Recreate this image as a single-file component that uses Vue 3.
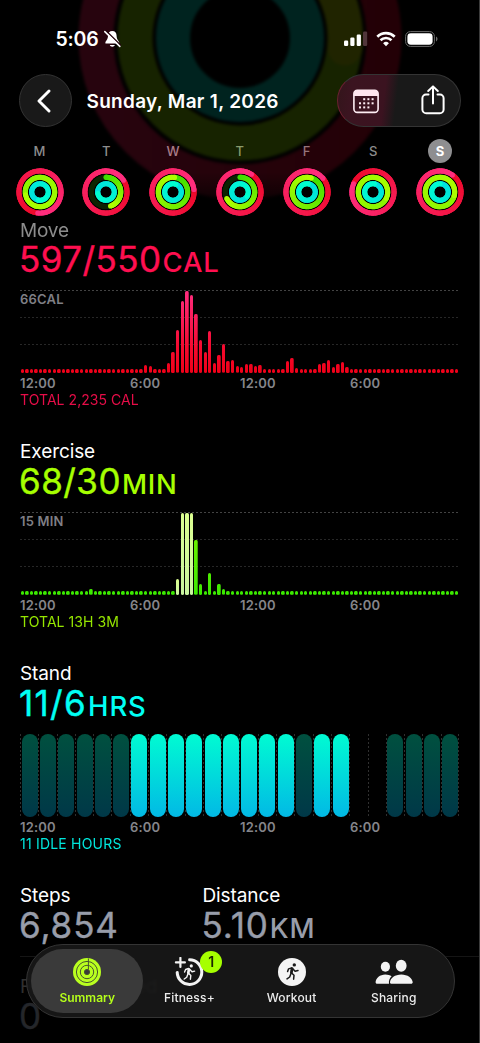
<script setup>
const GRID_COLUMNS = 96

function buildSeries(base, overrides) {
  return Array.from({ length: GRID_COLUMNS }, (_, i) => overrides[i] ?? base)
}

const moveBars = buildSeries(4, {
  27: 8, 28: 6.7, 32: 9.7, 33: 21, 34: 42.7, 35: 72.3, 36: 82.3, 37: 78.3, 38: 59.3, 39: 33,
  40: 21, 41: 42, 42: 10, 43: 18, 44: 28.7, 45: 12.3, 46: 13.3, 47: 6.7, 48: 6.3, 49: 9.3,
  50: 9.3, 51: 7, 52: 8.3, 53: 4.4, 58: 12, 59: 15, 60: 5, 64: 4.4, 65: 8.7, 66: 10.3,
  67: 13.3, 68: 6, 69: 9, 70: 11, 71: 6,
})
const exerciseBars = buildSeries(3.8, {
  15: 5.7, 34: 16.3, 35: 82.3, 36: 82.3, 37: 82.3, 38: 54.7, 39: 11, 41: 22, 43: 11, 44: 5.7,
})
const isWorkout = (i) => i >= 34 && i <= 37
const standHours = 'iiiiiiaaaaaaaaaiaa--iiii'.split('')
const axis = ['12:00', '6:00', '12:00', '6:00']

const palette = {
  red: [[238, 8, 40], [255, 46, 126]],
  green: [[60, 222, 0], [176, 255, 0]],
  lime: [[136, 244, 0], [172, 255, 0]],
  cyan: [[0, 222, 222], [0, 255, 208]],
}

const days = [
  { name: 'M', red: 186, green: 259, tone: 'lime', cyan: 190 },
  { name: 'T', red: 56, green: 162, tone: 'green', partial: true, cyan: 260 },
  { name: 'W', red: 83, green: 6, tone: 'green', cyan: 20, tint: 'pink' },
  { name: 'T', red: 33, green: 244, tone: 'green', partial: true, cyan: 120, tint: 'olive' },
  { name: 'F', red: 49, green: 17, tone: 'green', cyan: 10, tint: 'rose' },
  { name: 'S', red: 293, green: 115, tone: 'lime', cyan: 10 },
  { name: 'S', red: 36, green: 104, tone: 'lime', cyan: 0, selected: true },
]

function point(r, deg) {
  const a = (deg * Math.PI) / 180
  return [24 + r * Math.sin(a), 24 - r * Math.cos(a)]
}

// Splits a ring into short overlapping arcs so the colour can progress along its sweep.
function ringSegments(r, start, end, [from, to]) {
  const count = 40
  const step = (end - start) / count
  return Array.from({ length: count }, (_, i) => {
    const [x1, y1] = point(r, start + i * step - (i ? 8 : 0))
    const [x2, y2] = point(r, start + (i + 1) * step)
    const t = i / (count - 1)
    const rgb = from.map((c, k) => Math.round(c + (to[k] - c) * t))
    return { d: `M${x1} ${y1}A${r} ${r} 0 0 1 ${x2} ${y2}`, color: `rgb(${rgb})` }
  })
}

function makeRing(r, end, tone, partial) {
  const colors = palette[tone]
  const mid = colors[0].map((c, k) => Math.round((c + colors[1][k]) / 2))
  const [cx, cy] = point(r, end)
  const [sx, sy] = point(r, 0)
  return {
    r, cx, cy, sx, sy, partial,
    segments: ringSegments(r, partial ? 0 : end - 360, end, colors),
    baseColor: `rgb(${mid})`,
    startColor: `rgb(${colors[0]})`,
    endColor: `rgb(${colors[1]})`,
  }
}

const week = days.map((d) => ({
  ...d,
  rings: [
    makeRing(21.1, d.red, 'red', false),
    makeRing(14.7, d.green, d.tone, d.partial),
    makeRing(8.3, d.cyan, 'cyan', false),
  ],
}))
</script>

<template>
  <div class="screen">
    <svg class="halo" width="480" height="215" viewBox="0 0 480 215">
      <defs>
        <linearGradient id="haloRed" x1="0" x2="1" y1="0" y2="0">
          <stop offset="0" stop-color="#27040e" />
          <stop offset="1" stop-color="#230006" />
        </linearGradient>
        <linearGradient id="fade" x1="0" x2="0" y1="0" y2="1">
          <stop offset="0.8" stop-color="#000" stop-opacity="0" />
          <stop offset="0.97" stop-color="#000" stop-opacity="0.8" />
        </linearGradient>
      </defs>
      <g class="halo-rings" fill="none">
        <circle cx="240" cy="38" r="144" stroke="url(#haloRed)" stroke-width="35" />
        <circle cx="240" cy="38" r="105" stroke="#172300" stroke-width="35" />
        <path d="M240 -67A105 105 0 0 1 345 48" stroke="#202400" stroke-width="35" stroke-linecap="round" />
        <circle cx="240" cy="38" r="67" stroke="#00231f" stroke-width="34" />
      </g>
      <rect width="480" height="215" fill="url(#fade)" />
    </svg>

    <div class="status">
      <div class="clock">
        <span>5:06</span>
        <svg width="17" height="18" viewBox="0 0 17 18">
          <path d="M8.3 1C5.6 1 4 3 4 5.8C4 9.4 2 10.6 1.4 12.4C1.2 13.2 1.6 13.6 2.4 13.6H14.2C15 13.6 15.4 13.2 15.2 12.4C14.6 10.6 12.6 9.4 12.6 5.8C12.6 3 11 1 8.3 1Z" fill="#fff" />
          <path d="M5.8 15H10.8C10.4 17.2 6.2 17.2 5.8 15Z" fill="#fff" />
          <path d="M2 .8L17 15.6" stroke="#24040d" stroke-width="1.4" />
          <path d="M.8 1.6L15.8 16.4" stroke="#fff" stroke-width="1.5" stroke-linecap="round" />
        </svg>
      </div>
      <div class="radios">
        <svg class="signal" width="24" height="16" viewBox="0 0 24 16">
          <rect x="0" y="9.6" width="4.2" height="5.4" rx="1.2" fill="#fff" />
          <rect x="6.3" y="6.6" width="4.2" height="8.4" rx="1.2" fill="#fff" />
          <rect x="12.7" y="3.6" width="4.2" height="11.4" rx="1.2" fill="#fff" />
          <rect x="19" y=".6" width="4.2" height="14.4" rx="1.2" fill="#51353a" />
        </svg>
        <svg class="wifi" width="20" height="16" viewBox="0 0 20 16" fill="none" stroke="#fff">
          <path d="M1.3 5.7A12.6 12.6 0 0 1 18.7 5.7" stroke-width="2.7" />
          <path d="M4.5 9.2A8 8 0 0 1 15.5 9.2" stroke-width="2.6" />
          <path d="M10 15.2L7.1 12.2A4.1 4.1 0 0 1 12.9 12.2Z" fill="#fff" stroke="none" />
        </svg>
        <svg class="battery" width="33" height="16" viewBox="0 0 33 16">
          <rect x=".6" y=".6" width="28.8" height="14.8" rx="4.8" fill="none" stroke="#6a6a6a" stroke-width="1" />
          <rect x="2.4" y="2.3" width="25.2" height="11.4" rx="3.4" fill="#fff" />
          <path d="M31 5.6C33 6.4 33 9.6 31 10.4Z" fill="#6a6a6a" />
        </svg>
      </div>
    </div>

    <header class="nav">
      <button class="back">
        <svg width="14" height="24" viewBox="0 0 14 24" fill="none" stroke="#fff" stroke-width="2.9" stroke-linecap="round" stroke-linejoin="round">
          <path d="M12 2L2 12L12 22" />
        </svg>
      </button>
      <h1>Sunday, Mar 1, 2026</h1>
      <div class="actions">
        <svg class="calendar" width="26" height="25" viewBox="0 0 26 25">
          <rect x=".9" y="1.4" width="24.2" height="22" rx="3.4" fill="none" stroke="#ffeef4" stroke-width="1.6" />
          <path d="M.9 7V4.6A3.6 3.6 0 0 1 4.5 1H21.5A3.6 3.6 0 0 1 25.1 4.6V7Z" fill="#ffe6ef" />
          <g fill="#ffeef4">
            <rect x="10.2" y="9.2" width="2" height="2" /><rect x="14.4" y="9.2" width="2" height="2" /><rect x="18.6" y="9.2" width="2" height="2" />
            <rect x="6" y="13.3" width="2" height="2" /><rect x="10.2" y="13.3" width="2" height="2" /><rect x="14.4" y="13.3" width="2" height="2" /><rect x="18.6" y="13.3" width="2" height="2" />
            <rect x="6" y="17.4" width="2" height="2" /><rect x="10.2" y="17.4" width="2" height="2" /><rect x="14.4" y="17.4" width="2" height="2" />
          </g>
        </svg>
        <svg class="share" width="24" height="30" viewBox="0 0 24 30" fill="none" stroke="#fff" stroke-width="2" stroke-linecap="round" stroke-linejoin="round">
          <path d="M7.5 9.6H5A3.6 3.6 0 0 0 1.4 13.2V24.4A3.8 3.8 0 0 0 5.2 28.2H18.8A3.8 3.8 0 0 0 22.6 24.4V13.2A3.6 3.6 0 0 0 19 9.6H16.5" />
          <path d="M12 18.6V1.6M7.2 6L12 1.4L16.8 6" />
        </svg>
      </div>
    </header>

    <div class="week">
      <div v-for="(day, i) in week" :key="i" class="day">
        <span class="day-name" :class="[day.tint, { selected: day.selected }]">{{ day.name }}</span>
        <svg width="48" height="48" viewBox="0 0 48 48" fill="none">
          <circle cx="24" cy="24" r="23" fill="#000" fill-opacity="0.55" />
          <g v-for="ring in day.rings" :key="ring.r" stroke-width="5.1">
            <circle v-if="ring.partial" cx="24" cy="24" :r="ring.r" stroke="#0d2402" />
            <circle v-else cx="24" cy="24" :r="ring.r" stroke-width="4.6" :stroke="ring.baseColor" />
            <circle v-if="ring.partial" :cx="ring.sx" :cy="ring.sy" r="2.55" :fill="ring.startColor" />
            <path v-for="(seg, s) in ring.segments" :key="s" :d="seg.d" :stroke="seg.color" />
            <circle :cx="ring.cx" :cy="ring.cy" r="2.55" :fill="ring.endColor" />
          </g>
        </svg>
      </div>
    </div>

    <main>
      <section class="metric move">
        <h2 class="dimmed">Move</h2>
        <p class="value">597/550<small>CAL</small></p>
        <div class="chart">
          <i class="rule top"></i><i class="rule mid"></i><i class="rule low"></i>
          <span class="scale">66CAL</span>
          <div class="bars">
            <b v-for="(h, i) in moveBars" :key="i" :style="{ height: h + 'px' }"></b>
          </div>
        </div>
        <div class="axis"><span v-for="(t, i) in axis" :key="i">{{ t }}</span></div>
        <p class="total">TOTAL 2,235 CAL</p>
      </section>

      <section class="metric exercise">
        <h2>Exercise</h2>
        <p class="value">68/30<small>MIN</small></p>
        <div class="chart">
          <i class="rule top"></i><i class="rule mid"></i><i class="rule low"></i>
          <span class="scale">15 MIN</span>
          <div class="bars">
            <b v-for="(h, i) in exerciseBars" :key="i" :class="{ pale: isWorkout(i) }" :style="{ height: h + 'px' }"></b>
          </div>
        </div>
        <div class="axis"><span v-for="(t, i) in axis" :key="i">{{ t }}</span></div>
        <p class="total">TOTAL 13H 3M</p>
      </section>

      <section class="metric stand">
        <h2>Stand</h2>
        <p class="value">11/6<small>HRS</small></p>
        <div class="hours">
          <div v-for="(state, i) in standHours" :key="i" class="slot" :class="{ gap: state === '-' }">
            <b v-if="state !== '-'" :class="state === 'a' ? 'active' : 'idle'"></b>
          </div>
        </div>
        <div class="axis"><span v-for="(t, i) in axis" :key="i">{{ t }}</span></div>
        <p class="total idle-total">11 IDLE HOURS</p>
      </section>

      <section class="totals">
        <div>
          <h2>Steps</h2>
          <p class="value">6,854</p>
        </div>
        <div class="distance">
          <h2>Distance</h2>
          <p class="value">5.10<small>KM</small></p>
        </div>
      </section>

      <section class="flights">
        <h2>Flights Climbed</h2>
        <p class="value">0</p>
      </section>
    </main>

    <nav class="tabs">
      <div class="tab current">
        <svg width="30" height="30" viewBox="0 0 30 30" fill="none">
          <circle cx="15" cy="15" r="14" fill="#b9ff1f" />
          <g stroke="#46532f" stroke-width="1">
            <circle cx="15" cy="15" r="10.6" /><circle cx="15" cy="15" r="6.7" /><circle cx="15" cy="15" r="2.6" fill="#3a3a3a" />
            <path d="M16.4 1.5V12.6" />
          </g>
        </svg>
        <span>Summary</span>
      </div>
      <div class="tab fitness">
        <svg width="30" height="30" viewBox="0 0 30 30" fill="none" stroke="#f4f4f4" stroke-linecap="round" stroke-linejoin="round">
          <path d="M15.6 2.8A12.3 12.3 0 1 1 3.2 15.4" stroke-width="3" />
          <path d="M6.4 .9V9.9M1.9 5.4H10.9" stroke-width="2.2" />
          <g stroke-width="1.4">
            <circle cx="17.3" cy="8.9" r="1.6" fill="#f4f4f4" stroke="none" />
            <path d="M14.9 12.4L14.3 16" stroke-width="2.7" />
            <path d="M14.6 11.5L11.6 12.5L10.6 15M15.9 12.5L18 14.8L20.6 14.1M14.8 16.6L16.8 18.6L16.4 22.2M13.9 17L12.7 20.2L10.2 22" />
          </g>
        </svg>
        <em>1</em>
        <span>Fitness+</span>
      </div>
      <div class="tab workout">
        <svg width="30" height="30" viewBox="0 0 30 30" fill="none" stroke="#191919" stroke-linecap="round" stroke-linejoin="round">
          <circle cx="15" cy="15" r="14" fill="#f4f4f4" stroke="none" />
          <circle cx="17.3" cy="7.9" r="1.7" fill="#191919" stroke="none" />
          <path d="M15 11.7L14.4 15.6" stroke-width="2.8" />
          <path d="M14.7 10.9L11.5 11.9L10.6 14.6M16 12L18.1 14.3L21 13.6M14.9 16.2L17 18.3L16.6 22.2M14 16.6L12.7 20L10 21.9" stroke-width="1.5" />
        </svg>
        <span>Workout</span>
      </div>
      <div class="tab sharing">
        <svg width="38" height="30" viewBox="0 0 38 30" fill="#f4f4f4">
          <ellipse cx="10.4" cy="9.8" rx="4.6" ry="5" />
          <path d="M2.4 26.8C1 26.8 .6 26 .6 25C.8 21 5 17.4 10.3 17.4C12.8 17.4 15 18.1 16.6 19.3C14.6 21.2 13.6 23.6 14 26.8Z" />
          <ellipse cx="26.2" cy="8.8" rx="5.4" ry="6" />
          <path d="M16.8 26.8C15.4 26.8 14.9 26 15 25C15.3 21 20 17.4 26.3 17.4S37.3 21 37.7 25C37.8 26 37.2 26.8 35.8 26.8Z" />
        </svg>
        <span>Sharing</span>
      </div>
    </nav>
  </div>
</template>

<style>
html, body { background: #000; }
</style>

<style scoped>
.screen {
  position: relative;
  width: 480px;
  height: 1043px;
  overflow: hidden;
  box-sizing: border-box;
  border-right: 1px solid #3c3c3c;
  background: #000;
  color: #fff;
  font-family: Inter, "Liberation Sans", sans-serif;
}
h1, h2, p { margin: 0; font-weight: 400; }
svg { display: block; flex: none; }
.halo { position: absolute; left: 0; top: 0; }
.halo-rings { filter: blur(1.6px); }

.status {
  position: relative;
  display: flex;
  justify-content: space-between;
  align-items: center;
  height: 74px;
  padding: 4px 42px 0 55.5px;
  box-sizing: border-box;
}
.clock { display: flex; align-items: center; gap: 5px; font-size: 19.5px; font-weight: 600; letter-spacing: -0.2px; }
.radios { display: flex; align-items: center; margin-right: -1px; }
.wifi { margin-left: 8px; }
.battery { margin-left: 9px; }

.nav { position: relative; display: flex; align-items: center; height: 53px; padding: 0 18px 0 19px; }
.back {
  display: flex;
  align-items: center;
  justify-content: center;
  width: 53px;
  height: 53px;
  padding: 0 3px 0 0;
  border: 1px solid #333;
  border-radius: 50%;
  background: #191919;
  box-sizing: border-box;
}
h1 { margin-left: 14.5px; padding-top: 1px; font-size: 19px; font-weight: 600; letter-spacing: 0.3px; white-space: nowrap; }
.actions {
  display: flex;
  align-items: center;
  justify-content: space-between;
  width: 124px;
  height: 53px;
  margin-left: auto;
  padding: 0 15px 0 15px;
  box-sizing: border-box;
  border: 1px solid #343434;
  border-left-color: #6a2030;
  border-radius: 27px;
  background: linear-gradient(97deg, #33151b 0, #3b1420 12%, #3b1320 38%, #191919 48%);
}
.calendar { margin-top: 1px; }
.share { margin-top: -1px; }

.week { position: relative; display: flex; justify-content: space-between; padding: 12px 15px 0 15.5px; }
.day { display: flex; flex-direction: column; align-items: center; width: 48px; gap: 5px; }
.day-name {
  width: 24px;
  height: 24px;
  border-radius: 50%;
  font-size: 13px;
  line-height: 25px;
  font-weight: 500;
  text-align: center;
  color: #8d8d8d;
}
.pink { color: #a87d88; }
.olive { color: #8a9a6b; }
.rose { color: #94747a; }
.selected { background: #8e8e90; color: #fff; font-weight: 700; }

main { position: relative; padding: 2px 20px 0; }
.metric { height: 222px; }
h2 { height: 24px; font-size: 19px; line-height: 24px; letter-spacing: -0.1px; white-space: nowrap; }
.dimmed { color: #8c8c8c; line-height: 25px; filter: blur(0.5px); letter-spacing: -0.2px; }
.value {
  height: 34px;
  margin-left: -1px;
  font-size: 35px;
  line-height: 35px;
  letter-spacing: 0.45px;
  white-space: nowrap;
  -webkit-text-stroke: 0.4px currentColor;
}
.value small { margin-left: 1px; font-size: 27.5px; font-weight: 500; letter-spacing: 0.8px; -webkit-text-stroke: 0; }
.move { color: #ff0f50; }
.exercise { color: #a6ff00; }
.stand { color: #00fff4; }
.stand .value { letter-spacing: 1.3px; }
.stand .value small { letter-spacing: 0.9px; margin-left: 1px; }
.metric h2:not(.dimmed) { color: #fff; }

.chart { position: relative; height: 83px; margin-top: 14px; }
.rule {
  position: absolute;
  left: 0;
  width: 438px;
  height: 1px;
  background: repeating-linear-gradient(90deg, #272727 0 2px, transparent 2px 4px);
}
.rule.top { top: 0; background: repeating-linear-gradient(90deg, #434343 0 2px, transparent 2px 4px); }
.rule.mid { top: 27px; }
.rule.low { top: 54px; }
.scale { position: absolute; left: 0; top: 1px; color: #7f7f85; font-size: 13px; line-height: 16px; font-weight: 600; letter-spacing: 0.2px; }
.bars { position: relative; display: grid; grid-template-columns: repeat(96, 1fr); align-items: end; justify-items: center; height: 83px; }
.bars b { width: 3.4px; border-radius: 1.6px; }
.move .bars b { background: linear-gradient(to top, #f00018 0, #f50a2e 25px, #ff2d80 83px) bottom / 100% 83px no-repeat; }
.exercise .bars b { background: linear-gradient(to top, #3bea00 0, #80f200 83px) bottom / 100% 83px no-repeat; }
.exercise .bars b.pale { background: linear-gradient(to top, #c9f5a0, #dcff90); }

.axis {
  display: grid;
  grid-template-columns: repeat(4, 110px);
  margin-top: 1px;
  color: #85858a;
  font-size: 13px;
  line-height: 19px;
  height: 18px;
  font-weight: 600;
  letter-spacing: 0.15px;
}
.total { font-size: 14px; line-height: 16px; letter-spacing: 0.05px; opacity: 0.9; white-space: nowrap; }
.idle-total { letter-spacing: 0.2px; }

.hours { display: grid; grid-template-columns: repeat(24, 1fr); height: 83px; margin: 14px 0 0; position: relative; }
.slot { position: relative; display: flex; justify-content: center; }
.slot::before, .slot:last-child::after {
  content: "";
  position: absolute;
  left: 0;
  top: 0;
  width: 1px;
  height: 82px;
  background: repeating-linear-gradient(#303030 0 2px, transparent 2px 4px);
}
.slot:last-child::after { left: auto; right: 0; }
.slot b { width: 16px; height: 83px; border-radius: 8px; margin-left: 1px; }
.active { background: linear-gradient(#00fbd2, #02b9e5); }
.idle { background: linear-gradient(#00503f, #003848); }

.totals { display: flex; height: 72px; }
.totals > div { width: 182.5px; }
.totals .value, .flights .value { color: #989daa; }
.totals .value { letter-spacing: 0.9px; }
.flights { height: 84px; margin: 0 -20px 0 0; padding-top: 18px; border-top: 1px solid #151515; box-sizing: border-box; }
.flights h2 { color: #303030; }
.flights .value { color: #24262a; }

.tabs {
  position: absolute;
  left: 26px;
  top: 944px;
  display: grid;
  grid-template-columns: repeat(4, 102.2px);
  justify-content: center;
  width: 429px;
  height: 74px;
  box-sizing: border-box;
  border: 1px solid #343434;
  border-radius: 37px;
  background: rgba(25, 25, 25, 0.88);
  backdrop-filter: blur(1.5px);
}
.tab { position: relative; display: flex; flex-direction: column; align-items: center; padding-top: 12px; color: #ececec; font-size: 12px; line-height: 14px; font-weight: 500; letter-spacing: 0.2px; }
.tab span { margin-top: 4px; }
.current { z-index: 0; color: #b5ff1a; font-weight: 600; letter-spacing: 0; }
.current::before {
  content: "";
  position: absolute;
  z-index: -1;
  left: -5px;
  right: -5px;
  top: 4px;
  bottom: 4px;
  border-radius: 32px;
  background: rgba(62, 62, 62, 0.9);
}
.tab em {
  position: absolute;
  left: 62px;
  top: 6px;
  width: 22px;
  height: 22px;
  border-radius: 50%;
  background: #a6ff00;
  color: #1c2600;
  font-size: 14px;
  line-height: 22px;
  font-style: normal;
  font-weight: 600;
  text-align: center;
}
</style>
